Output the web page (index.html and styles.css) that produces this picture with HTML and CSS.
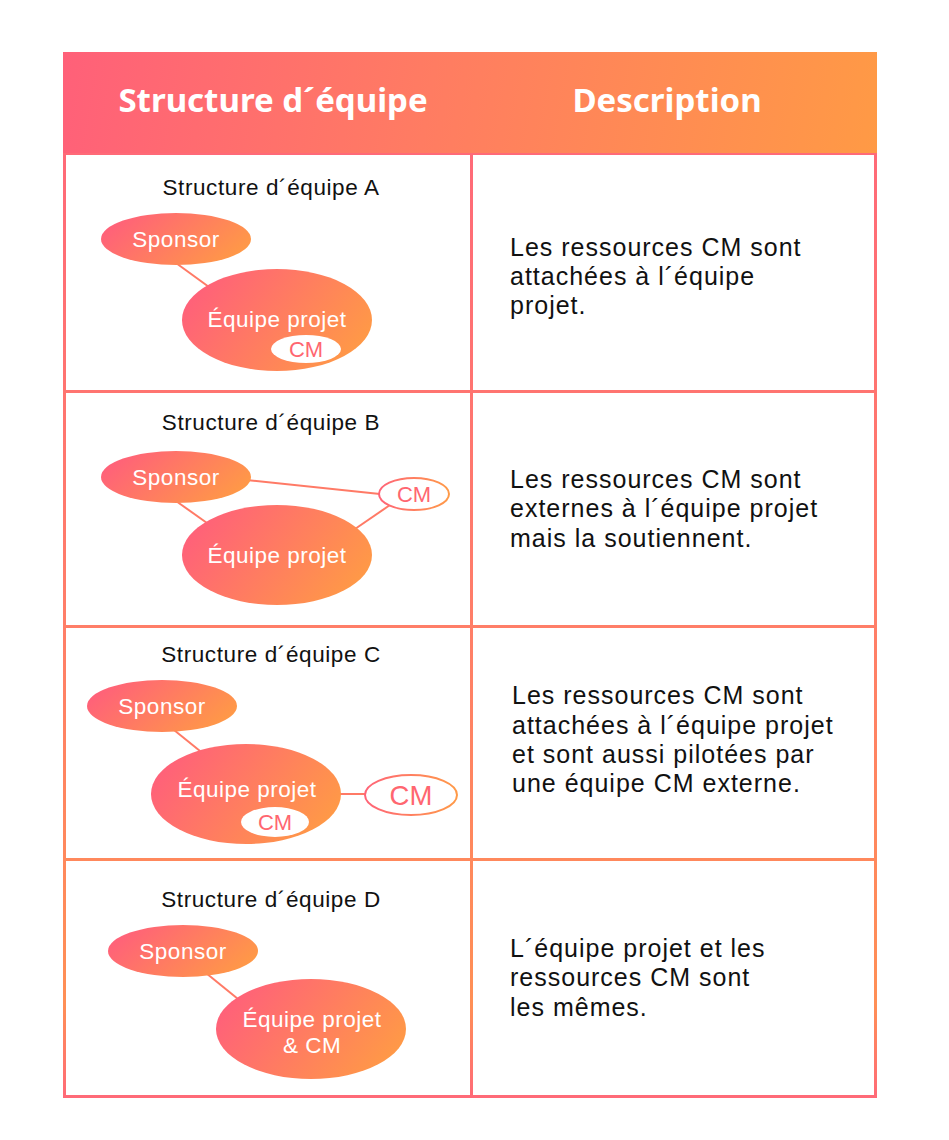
FILE: index.html
```html
<!DOCTYPE html>
<html lang="fr">
<head>
<meta charset="utf-8">
<title>Structure d´équipe</title>
<link rel="stylesheet" href="styles.css">
</head>
<body>
<div class="table">
  <div class="head">
    <div class="hcell hleft">Structure d´équipe</div>
    <div class="hcell hright">Description</div>
  </div>
  <div class="body">
    <div class="cell diagram">
      <svg width="404" height="235" viewBox="0 0 404 235">
        <defs>
          <linearGradient id="gA" x1="0" y1="0.3" x2="1" y2="0.7"><stop offset="0" stop-color="#ff5f7b"/><stop offset="1" stop-color="#ff9b45"/></linearGradient>
        </defs>
        <text class="t-title" x="205" y="40">Structure d´équipe A</text>
        <line class="link" x1="110" y1="108" x2="143" y2="132"/>
        <ellipse cx="110" cy="84" rx="75" ry="26" fill="url(#gA)"/>
        <text class="t-node" x="110" y="92">Sponsor</text>
        <ellipse cx="211" cy="165" rx="95" ry="51" fill="url(#gA)"/>
        <text class="t-node" x="211" y="172">Équipe projet</text>
        <ellipse cx="240" cy="194" rx="35" ry="14" fill="#fff"/>
        <text class="t-cm" x="240" y="202">CM</text>
      </svg>
    </div>
    <div class="cell desc desc-low"><p>Les ressources CM sont<br>attachées à l´équipe<br>projet.</p></div>

    <div class="cell diagram">
      <svg width="404" height="232" viewBox="0 0 404 232">
        <defs>
          <linearGradient id="gB" x1="0" y1="0.3" x2="1" y2="0.7"><stop offset="0" stop-color="#ff5f7b"/><stop offset="1" stop-color="#ff9b45"/></linearGradient>
          <linearGradient id="sB" x1="0" y1="0" x2="1" y2="0"><stop offset="0" stop-color="#ff6478"/><stop offset="1" stop-color="#ff9a48"/></linearGradient>
        </defs>
        <text class="t-title" x="205" y="37">Structure d´équipe B</text>
        <line class="link" x1="180" y1="87" x2="314" y2="101"/>
        <line class="link" x1="110" y1="108" x2="141" y2="130"/>
        <line class="link" x1="324" y1="112" x2="289" y2="136"/>
        <ellipse cx="110" cy="84" rx="75" ry="26" fill="url(#gB)"/>
        <text class="t-node" x="110" y="92">Sponsor</text>
        <ellipse cx="348" cy="101" rx="35" ry="16" fill="#fff" stroke="url(#sB)" stroke-width="2"/>
        <text class="t-cm" x="348" y="109">CM</text>
        <ellipse cx="211" cy="162" rx="95" ry="50" fill="url(#gB)"/>
        <text class="t-node" x="211" y="170">Équipe projet</text>
      </svg>
    </div>
    <div class="cell desc"><p>Les ressources CM sont<br>externes à l´équipe projet<br>mais la soutiennent.</p></div>

    <div class="cell diagram">
      <svg width="404" height="230" viewBox="0 0 404 230">
        <defs>
          <linearGradient id="gC" x1="0" y1="0.3" x2="1" y2="0.7"><stop offset="0" stop-color="#ff5f7b"/><stop offset="1" stop-color="#ff9b45"/></linearGradient>
          <linearGradient id="sC" x1="0" y1="0" x2="1" y2="0"><stop offset="0" stop-color="#ff6478"/><stop offset="1" stop-color="#ff9a48"/></linearGradient>
        </defs>
        <text class="t-title" x="205" y="34">Structure d´équipe C</text>
        <line class="link" x1="108" y1="102" x2="134" y2="123"/>
        <line class="link" x1="272" y1="166" x2="300" y2="166"/>
        <ellipse cx="96" cy="78" rx="75" ry="26" fill="url(#gC)"/>
        <text class="t-node" x="96" y="86">Sponsor</text>
        <ellipse cx="180" cy="166" rx="95" ry="50" fill="url(#gC)"/>
        <text class="t-node" x="181" y="169">Équipe projet</text>
        <ellipse cx="209" cy="194" rx="34" ry="15" fill="#fff"/>
        <text class="t-cm" x="209" y="202">CM</text>
        <ellipse cx="345" cy="167" rx="46" ry="20" fill="#fff" stroke="url(#sC)" stroke-width="2"/>
        <text class="t-cm t-cm-big" x="345" y="177">CM</text>
      </svg>
    </div>
    <div class="cell desc desc-high"><p>Les ressources CM sont<br>attachées à l´équipe projet<br>et sont aussi pilotées par<br>une équipe CM externe.</p></div>

    <div class="cell diagram">
      <svg width="404" height="234" viewBox="0 0 404 234">
        <defs>
          <linearGradient id="gD" x1="0" y1="0.3" x2="1" y2="0.7"><stop offset="0" stop-color="#ff5f7b"/><stop offset="1" stop-color="#ff9b45"/></linearGradient>
        </defs>
        <text class="t-title" x="205" y="46">Structure d´équipe D</text>
        <line class="link" x1="140" y1="112" x2="172" y2="138"/>
        <ellipse cx="117" cy="90" rx="75" ry="26" fill="url(#gD)"/>
        <text class="t-node" x="117" y="98">Sponsor</text>
        <ellipse cx="245" cy="168" rx="95" ry="50" fill="url(#gD)"/>
        <text class="t-node" x="246" y="166">Équipe projet</text>
        <text class="t-node" x="246" y="192">&amp; CM</text>
      </svg>
    </div>
    <div class="cell desc"><p>L´équipe projet et les<br>ressources CM sont<br>les mêmes.</p></div>
  </div>
</div>
</body>
</html>
```

FILE: styles.css
```css
html, body {
  margin: 0;
  padding: 0;
  background: #ffffff;
}

body {
  font-family: "Liberation Sans", Arial, sans-serif;
  color: #111;
}

.table {
  width: 814px;
  margin: 52px 0 0 63px;
}

.head {
  display: grid;
  grid-template-columns: 407px 407px;
  height: 101px;
  background: linear-gradient(100deg, #ff6079 0%, #ff7c62 45%, #ff9a45 100%);
}

.hcell {
  display: flex;
  align-items: center;
  justify-content: center;
  padding-bottom: 7px;
  color: #fff;
  font-family: "Noto Sans", "DejaVu Sans", sans-serif;
  font-weight: 700;
  font-size: 33px;
}

.hleft {
  padding-left: 13px;
}

.hright {
  padding-right: 13px;
}

.body {
  display: grid;
  grid-template-columns: 404px 401px;
  grid-template-rows: 235px 232px 230px 234px;
  gap: 3px;
  padding: 2px 3px 3px 3px;
  background: linear-gradient(180deg, #ff6a78 0%, #ff7c6a 45%, #ff8f55 90%, #ff6a78 100%);
}

.cell {
  background: #fff;
}

.diagram svg {
  display: block;
}

.diagram text {
  font-family: "Liberation Sans", Arial, sans-serif;
  text-anchor: middle;
}

.t-title {
  font-size: 22.5px;
  letter-spacing: 0.6px;
  fill: #111;
}

.t-node {
  font-size: 22.5px;
  letter-spacing: 0.5px;
  fill: #fff;
}

.t-cm {
  font-size: 22px;
  fill: #ff6670;
}

.t-cm-big {
  font-size: 27.5px;
}

.link {
  stroke: #ff7a66;
  stroke-width: 2;
}

.desc {
  display: flex;
  align-items: center;
  padding-left: 37px;
}

.desc-low {
  padding-top: 8px;
}

.desc-high {
  padding-bottom: 6px;
  padding-left: 39px;
}

.desc p {
  margin: 0;
  font-size: 25px;
  line-height: 29.3px;
  letter-spacing: 1px;
  color: #111;
}
```
